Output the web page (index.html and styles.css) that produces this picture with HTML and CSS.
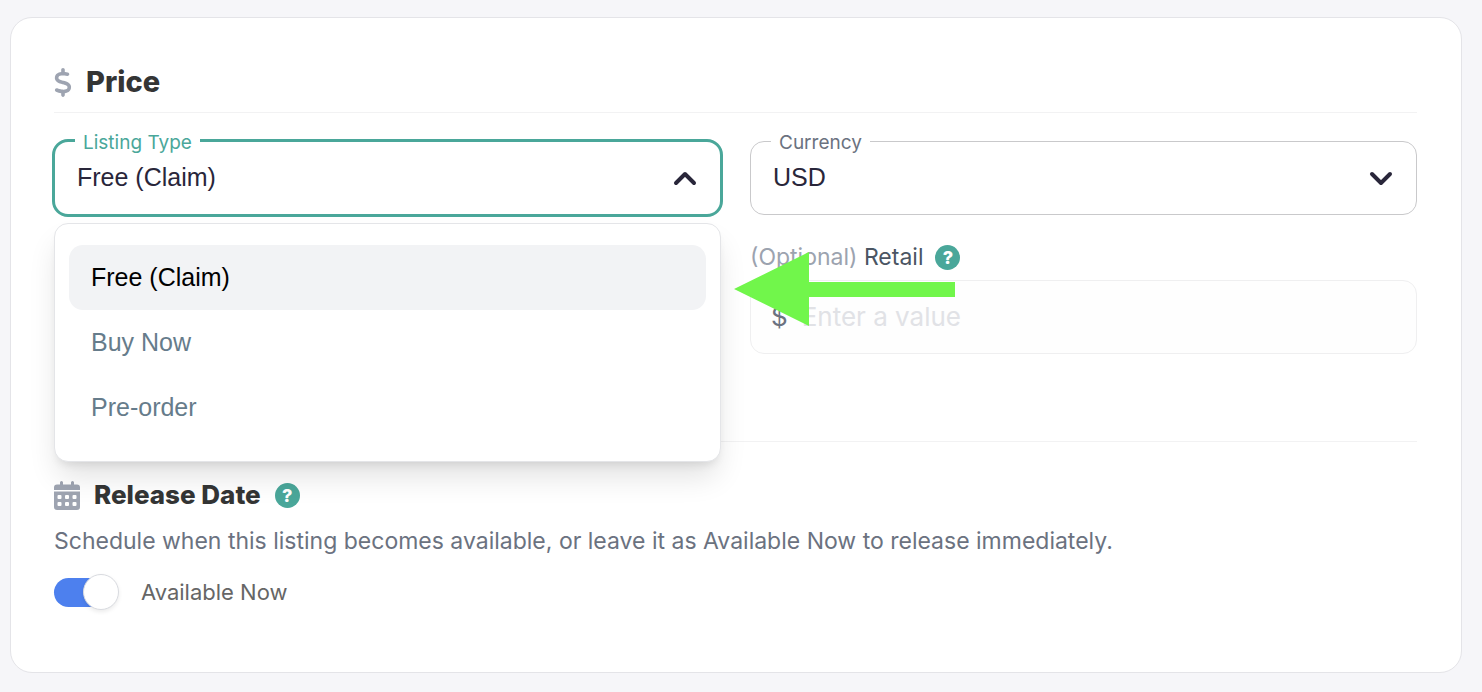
FILE: index.html
```html
<!DOCTYPE html>
<html lang="en">
<head>
<meta charset="utf-8">
<meta name="viewport" content="width=device-width, initial-scale=1">
<title>Listing price</title>
<link rel="stylesheet" href="styles.css">
</head>
<body>
<main class="card">
  <section class="price">
    <h2 class="heading heading-large">
      <svg class="icon-dollar" viewBox="0 0 320 512" aria-hidden="true"><path fill="currentColor" d="M160 0c17.700 0 32 14.300 32 32l0 35.700c1.600 .2 3.100 .4 4.700 .7c.4 .1 .7 .1 1.100 .2l48 8.800c17.400 3.200 28.900 19.900 25.700 37.200s-19.900 28.900-37.200 25.700l-47.500-8.700c-31.300-4.600-58.900-1.500-78.300 6.200s-27.200 18.300-29 28.100c-2 10.700-.5 16.700 1.200 20.400c1.800 3.900 5.500 8.300 12.800 13.200c16.300 10.700 41.300 17.700 73.700 26.300l2.900 .8c28.600 7.600 63.600 16.800 89.600 33.800c14.200 9.300 27.600 21.900 35.900 39.500c8.500 17.900 10.300 37.900 6.400 59.200c-6.900 38-33.100 63.400-65.600 76.700c-13.700 5.600-28.600 9.200-44.400 11l0 33.400c0 17.700-14.300 32-32 32s-32-14.300-32-32l0-34.900c-.4-.1-.9-.1-1.300-.2l-.2 0c-24.400-3.800-64.500-14.300-91.500-26.300c-16.100-7.200-23.400-26.100-16.200-42.200s26.100-23.400 42.200-16.200c20.900 9.300 55.300 18.500 75.200 21.600c31.900 4.700 58.200 2 76-5.300c16.900-6.900 24.600-16.900 26.800-28.900c1.900-10.600 .4-16.700-1.300-20.400c-1.900-4-5.600-8.400-13-13.300c-16.400-10.700-41.500-17.700-74-26.300l-2.800-.7C119.400 279.300 84.400 270 58.400 253c-14.200-9.300-27.500-22-35.800-39.600c-8.400-17.900-10.100-37.900-6.100-59.200C23.700 116 52.300 91.200 84.800 78.300c13.300-5.300 27.900-8.900 43.200-11L128 32c0-17.700 14.300-32 32-32z"/></svg>
      Price
    </h2>
    <div class="fields">
      <div class="field is-open">
        <select class="select" id="listing-type">
          <option selected>Free (Claim)</option>
          <option>Buy Now</option>
          <option>Pre-order</option>
        </select>
        <label class="field-label" for="listing-type">Listing Type</label>
        <svg class="chevron" viewBox="0 0 24 16" aria-hidden="true"><path d="M3 13l9-9 9 9"/></svg>
        <div class="menu" role="listbox" aria-label="Listing Type">
          <button class="option is-active" type="button" role="option" aria-selected="true">Free (Claim)</button>
          <button class="option" type="button" role="option" aria-selected="false">Buy Now</button>
          <button class="option" type="button" role="option" aria-selected="false">Pre-order</button>
        </div>
      </div>
      <div class="field">
        <select class="select" id="currency"><option>USD</option></select>
        <label class="field-label" for="currency">Currency</label>
        <svg class="chevron" viewBox="0 0 24 16" aria-hidden="true"><path d="M3 4l9 9 9-9"/></svg>
      </div>
      <div class="retail">
        <div class="retail-head">
          <label for="retail"><span class="muted">(Optional)</span> Retail</label>
          <button class="help" type="button" aria-label="About retail price">?</button>
        </div>
        <div class="amount">
          <span class="amount-sign">$</span>
          <input class="amount-input" id="retail" type="text" placeholder="Enter a value">
        </div>
        <svg class="pointer" viewBox="0 0 221 74" aria-hidden="true"><path fill="#71f64b" d="M0 37L75 0v30h146v15H75v29z"/></svg>
      </div>
    </div>
  </section>
  <section class="release">
    <h2 class="heading">
      <svg class="icon-calendar" viewBox="0 0 26 29" aria-hidden="true"><path fill="currentColor" fill-rule="evenodd" d="M0 9V6.500A3 3 0 0 1 3 3.500H6V1.500a1.500 1.500 0 0 1 3 0v2h8v-2a1.500 1.500 0 0 1 3 0v2h3a3 3 0 0 1 3 3V9zM0 10.500h26v15.500a3 3 0 0 1-3 3H3a3 3 0 0 1-3-3zM4.500 14a1 1 0 0 0-1 1v2a1 1 0 0 0 1 1h2a1 1 0 0 0 1-1v-2a1 1 0 0 0-1-1zM12 14a1 1 0 0 0-1 1v2a1 1 0 0 0 1 1h2a1 1 0 0 0 1-1v-2a1 1 0 0 0-1-1zM19.500 14a1 1 0 0 0-1 1v2a1 1 0 0 0 1 1h2a1 1 0 0 0 1-1v-2a1 1 0 0 0-1-1zM4.500 21a1 1 0 0 0-1 1v2a1 1 0 0 0 1 1h2a1 1 0 0 0 1-1v-2a1 1 0 0 0-1-1zM12 21a1 1 0 0 0-1 1v2a1 1 0 0 0 1 1h2a1 1 0 0 0 1-1v-2a1 1 0 0 0-1-1zM19.500 21a1 1 0 0 0-1 1v2a1 1 0 0 0 1 1h2a1 1 0 0 0 1-1v-2a1 1 0 0 0-1-1z"/></svg>
      Release Date
      <button class="help" type="button" aria-label="About release date">?</button>
    </h2>
    <p class="description">Schedule when this listing becomes available, or leave it as Available Now to release immediately.</p>
    <div class="toggle-row">
      <input class="toggle" id="available" type="checkbox" role="switch" checked>
      <label for="available">Available Now</label>
    </div>
  </section>
</main>
</body>
</html>
```
FILE: styles.css
```css
*,
*::before,
*::after {
  box-sizing: border-box;
}

body {
  margin: 0;
  padding: 17px 20px 19px 10px;
  background: #f6f6f9;
  color: #6b7280;
  font-family: Inter, "Open Sans", sans-serif;
  font-size: 23px;
  line-height: 32px;
}

button,
input,
select {
  margin: 0;
  font: inherit;
}

.card {
  padding: 44px 44px 62px 43px;
  background: #fff;
  border: 1px solid #e4e4e8;
  border-radius: 22px;
}

.price {
  padding-bottom: 87px;
  border-bottom: 1px solid #f2f2f3;
}

.heading {
  display: flex;
  align-items: center;
  gap: 14px;
  margin: 0;
  color: #343535;
  font-size: 26px;
  font-weight: 800;
  line-height: 40px;
}

.heading-large {
  padding-bottom: 10px;
  border-bottom: 1px solid #f2f2f3;
  font-size: 29px;
}

.icon-dollar,
.icon-calendar {
  flex: none;
  color: #9ea4b1;
}

.icon-dollar {
  width: 18px;
  height: 29px;
}

.icon-calendar {
  width: 26px;
  height: 29px;
}

.fields {
  display: grid;
  grid-template-columns: 1fr 1fr;
  gap: 26px 29px;
  padding-top: 28px;
}

.field {
  position: relative;
}

.select {
  display: block;
  width: 100%;
  height: 74px;
  padding: 0 64px 2px 22px;
  appearance: none;
  background: #fff;
  border: 1px solid #c9c9cb;
  border-radius: 14px;
  color: #29263a;
  font-family: "Liberation Sans", Arial, sans-serif;
  font-size: 25px;
}

.is-open .select {
  border-color: transparent;
  outline: 3px solid #4aa79a;
  outline-offset: -1px;
}

.field-label {
  position: absolute;
  top: -12px;
  left: 21px;
  padding: 1px 8px 0;
  background: #fff;
  font-size: 19px;
  line-height: 26px;
}

.is-open .field-label {
  color: #4aa79a;
}

.chevron {
  position: absolute;
  top: 29px;
  right: 24px;
  width: 24px;
  height: 16px;
  fill: none;
  stroke: #29263a;
  stroke-width: 4;
  stroke-linecap: round;
  stroke-linejoin: round;
  pointer-events: none;
}

.menu {
  position: absolute;
  z-index: 1;
  top: 82px;
  left: 0;
  right: 0;
  padding: 21px 14px;
  background: #fff;
  border: 1px solid #e4e5e8;
  border-radius: 14px;
  box-shadow: 0 18px 30px -4px rgba(0, 0, 0, 0.12), 0 6px 10px -4px rgba(0, 0, 0, 0.1);
}

.option {
  display: block;
  width: 100%;
  height: 65px;
  padding: 0 22px 2px;
  background: none;
  border: 0;
  border-radius: 14px;
  color: #667c8b;
  font-family: "Liberation Sans", Arial, sans-serif;
  font-size: 25px;
  text-align: left;
}

.option.is-active {
  background: #f2f3f5;
  color: #000;
}

.retail {
  position: relative;
  grid-column: 2;
}

.retail-head {
  display: flex;
  align-items: center;
  gap: 12px;
  padding-bottom: 7px;
  color: #4b5563;
}

.muted {
  color: #9ca3af;
}

.help {
  flex: none;
  width: 25px;
  height: 25px;
  padding: 0;
  background: #4aa79a;
  border: 0;
  border-radius: 50%;
  color: #fff;
  font-size: 18px;
  font-weight: 800;
  line-height: 25px;
  text-align: center;
}

.amount {
  display: flex;
  align-items: center;
  gap: 14px;
  height: 74px;
  padding: 0 20px;
  background: #fefefe;
  border: 1px solid #efeff0;
  border-radius: 14px;
  font-size: 26px;
}

.amount-input {
  flex: 1;
  min-width: 0;
  padding: 0;
  background: none;
  border: 0;
  color: #4b5563;
}

.amount-input::placeholder {
  color: #e1e2e6;
}

.pointer {
  position: absolute;
  top: 11px;
  left: -16px;
  width: 221px;
  height: 74px;
}

.release {
  padding-top: 33px;
}

.description {
  margin: 0;
  padding: 10px 0 17px;
}

.toggle-row {
  display: flex;
  align-items: center;
  gap: 22px;
  color: #666;
  font-size: 22px;
}

.toggle {
  display: flex;
  align-items: center;
  width: 65px;
  height: 36px;
  appearance: none;
}

.toggle::before {
  content: "";
  flex: none;
  width: 58px;
  height: 29px;
  background: #4d80ee;
  border-radius: 15px;
}

.toggle::after {
  content: "";
  flex: none;
  width: 36px;
  height: 36px;
  margin-left: -29px;
  background: #fff;
  border: 1px solid #d9dbe0;
  border-radius: 50%;
  box-shadow: 0 2px 4px rgba(0, 0, 0, 0.08);
}
```
